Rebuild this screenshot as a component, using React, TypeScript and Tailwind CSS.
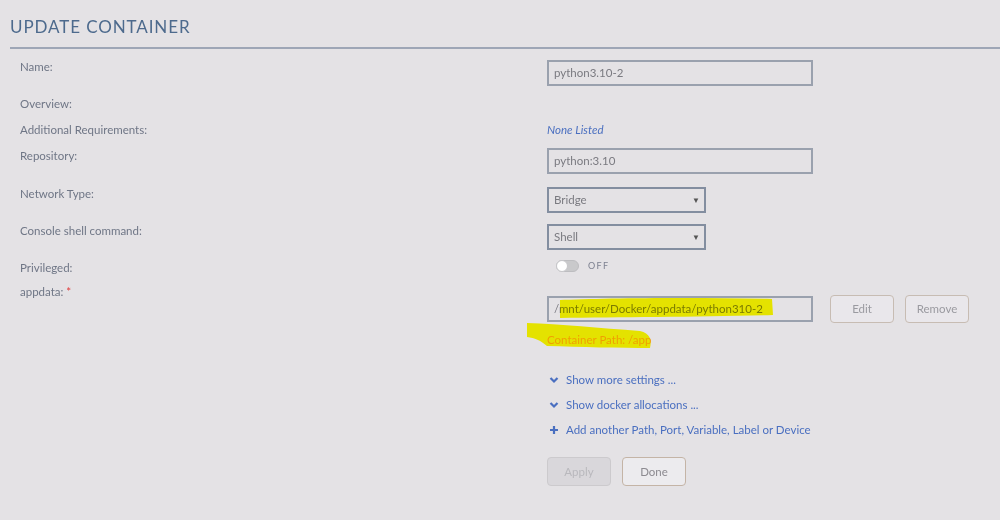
import React from "react";

function Chevron() {
  return (
    <svg width="10" height="10" viewBox="0 0 10 10" className="ml-[2px] mr-[7px]">
      <polyline points="1.5,3 5,6.5 8.5,3" fill="none" stroke="#4a6fc0" strokeWidth="2.2" />
    </svg>
  );
}

function Plus() {
  return (
    <svg width="10" height="10" viewBox="0 0 10 10" className="ml-[2px] mr-[7px]">
      <path d="M5 1v8M1 5h8" stroke="#4a6fc0" strokeWidth="2.2" />
    </svg>
  );
}

function Row({ label, children, className = "" }: { label: React.ReactNode; children?: React.ReactNode; className?: string }) {
  return (
    <div className={`flex text-[11.5px] leading-[14px] ${className}`}>
      <div className="w-[527px] shrink-0 text-[#6f7686]">{label}</div>
      <div className="flex-1">{children}</div>
    </div>
  );
}

function TextBox({ value }: { value: string }) {
  return (
    <div className="w-[266px] h-[26px] border-2 border-[#9aa1ae] flex items-center px-[5px] text-[#7a7a80]">
      {value}
    </div>
  );
}

function Select({ value }: { value: string }) {
  return (
    <div className="w-[159px] h-[26px] border-2 border-[#838ea0] flex items-center justify-between pl-[5px] pr-[4px] text-[#7a7a80]">
      <span>{value}</span>
      <span className="text-[8px] text-[#555]">▼</span>
    </div>
  );
}

export default function App() {
  return (
    <div className="relative w-[1000px] h-[520px] overflow-hidden bg-[#e4e2e5]" style={{ fontFamily: "Lato, sans-serif" }}>
      <div className="pl-[10px] pt-[16px]">
        <h1 className="text-[17px] leading-[22px] tracking-[0.9px] text-[#4d6a8d] font-normal">UPDATE CONTAINER</h1>
        <div className="mt-[9px] h-[2px] bg-[#9ea6b6]" />
      </div>

      <div className="pl-[20px] pt-[11px]">
        <Row label="Name:">
          <TextBox value="python3.10-2" />
        </Row>
        <Row label="Overview:" className="mt-[11px]" />
        <Row label="Additional Requirements:" className="mt-[12px]">
          <span className="italic text-[#4a6fc0]">None Listed</span>
        </Row>
        <Row label={<div className="pt-[1px]">Repository:</div>} className="mt-[11px]">
          <TextBox value="python:3.10" />
        </Row>
        <Row label="Network Type:" className="mt-[13px]">
          <Select value="Bridge" />
        </Row>
        <Row label="Console shell command:" className="mt-[11px]">
          <Select value="Shell" />
        </Row>
        <Row label="Privileged:" className="mt-[11px]">
          <div className="flex items-center pl-[9px] h-[12px] mt-[-1px]">
            <div className="relative w-[23px] h-[12px] rounded-full bg-[#c9c9cb] border border-[#bdbdc0]">
              <div className="absolute left-[-1px] top-[-1px] w-[12px] h-[12px] rounded-full bg-white border border-[#c6c6c9]" />
            </div>
            <span className="ml-[9px] text-[9px] tracking-[1.4px] text-[#7d8190]">OFF</span>
          </div>
        </Row>
        <Row
          label={
            <span>
              appdata: <span className="text-[#e23b3b]">*</span>
            </span>
          }
          className="mt-[10px]"
        >
          <div className="pt-[10px]">
            <div className="flex items-center">
              <TextBox value="/mnt/user/Docker/appdata/python310-2" />
              <button className="ml-[17px] w-[64px] h-[28px] rounded-[4px] border border-[#c7bcb3] bg-[#e9e7eb] text-[#9a9aa0]">Edit</button>
              <button className="ml-[11px] w-[64px] h-[28px] rounded-[4px] border border-[#c7bcb3] bg-[#e9e7eb] text-[#9a9aa0]">Remove</button>
            </div>
            <div className="mt-[10px] text-[#f0a02c]">Container Path: /app</div>
            <div className="mt-[26px] flex items-center text-[#4a6fc0]">
              <Chevron />
              Show more settings ...
            </div>
            <div className="mt-[11px] flex items-center text-[#4a6fc0]">
              <Chevron />
              Show docker allocations ...
            </div>
            <div className="mt-[11px] flex items-center text-[#4a6fc0]">
              <Plus />
              Add another Path, Port, Variable, Label or Device
            </div>
            <div className="mt-[20px] flex gap-[11px]">
              <button className="w-[64px] h-[29px] rounded-[4px] border border-[#cccacd] bg-[#d9d7db] text-[#b9b8bd]">Apply</button>
              <button className="w-[64px] h-[29px] rounded-[4px] border border-[#c4b4a6] bg-[#ecebee] text-[#8c8a90]">Done</button>
            </div>
          </div>
        </Row>
      </div>

      <svg className="absolute left-0 top-0 pointer-events-none mix-blend-darken" width="1000" height="520">
        <path
          d="M560 300 C600 298 700 297 772 299 L773 315 C700 317 620 317 560 318 Z"
          fill="#eef200"
        />
        <path
          d="M527 323 C560 324 600 328 640 331 C650 333 652 340 650 348 C620 348 580 347 547 346 C540 340 535 338 527 337 Z"
          fill="#eef200"
        />
      </svg>
    </div>
  );
}
